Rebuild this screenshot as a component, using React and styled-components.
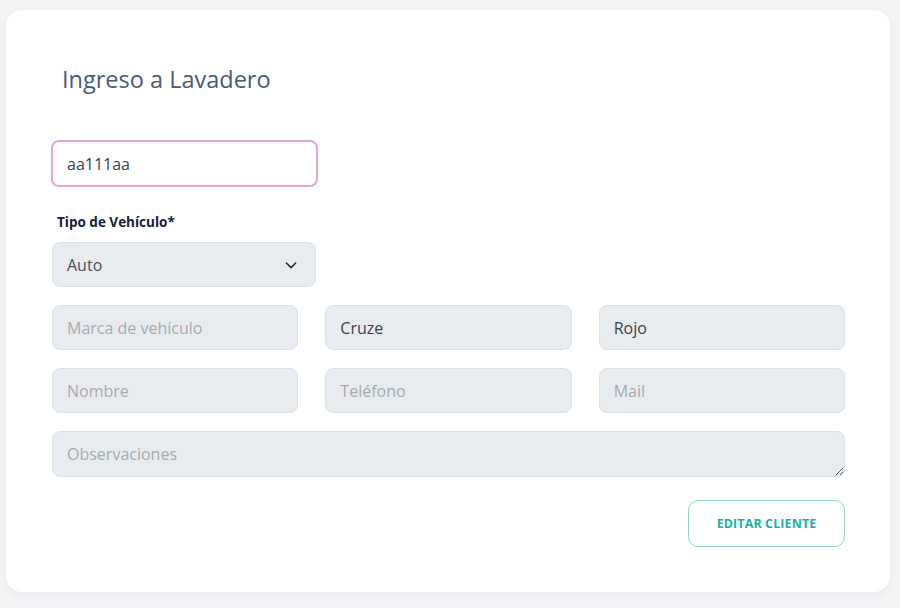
import styled, { createGlobalStyle } from "styled-components";

const GlobalStyle = createGlobalStyle`
  html, body {
    margin: 0;
    padding: 0;
    background: #f3f4f6;
    font-family: "Open Sans", "Noto Sans", sans-serif;
  }
  * { box-sizing: border-box; }
`;

const Page = styled.div`
  width: 900px;
  height: 608px;
  padding: 10px 10px 16px 6px;
`;

const Card = styled.div`
  background: #ffffff;
  border-radius: 16px;
  box-shadow: 0 2px 10px rgba(20, 30, 60, 0.05);
  height: 582px;
  padding: 54px 45px 0 46px;
`;

const Title = styled.h1`
  margin: 0 0 46px 10px;
  font-size: 23.5px;
  line-height: 30px;
  font-weight: 400;
  color: #4a5b74;
`;

const Field = styled.input`
  display: block;
  width: 100%;
  height: 45px;
  padding: 0 14px;
  border-radius: 8px;
  border: 1px solid #dde1e5;
  background: #e9ecef;
  font-family: inherit;
  font-size: 16px;
  color: #3d4249;
  outline: none;
  &::placeholder {
    color: #a5abb2;
  }
`;

const PlateInput = styled(Field)`
  width: 267px;
  height: 47px;
  margin-left: -1px;
  background: #ffffff;
  border: 2px solid #e6a6d6;
`;

const Label = styled.label`
  display: block;
  margin: 26px 0 11px 5px;
  font-size: 13.5px;
  line-height: 18px;
  font-weight: 700;
  color: #14213d;
`;

const SelectBox = styled.div`
  width: 264px;
  height: 45px;
  padding: 0 16px 0 14px;
  display: flex;
  align-items: center;
  justify-content: space-between;
  border-radius: 8px;
  border: 1px solid #dde1e5;
  background: #e9ecef;
  font-size: 16px;
  color: #4b5158;
`;

const Grid = styled.div`
  display: grid;
  grid-template-columns: repeat(3, 1fr);
  column-gap: 27px;
  row-gap: 18px;
  margin-top: 18px;
`;

const TextArea = styled.textarea`
  display: block;
  width: 100%;
  height: 46px;
  margin-top: 18px;
  padding: 10px 14px;
  border-radius: 8px;
  border: 1px solid #dde1e5;
  background: #e9ecef;
  font-family: inherit;
  font-size: 16px;
  line-height: 24px;
  color: #3d4249;
  resize: vertical;
  outline: none;
  &::placeholder {
    color: #a5abb2;
  }
`;

const Actions = styled.div`
  display: flex;
  justify-content: flex-end;
  margin-top: 23px;
`;

const OutlineButton = styled.button`
  width: 157px;
  height: 47px;
  border-radius: 10px;
  border: 1px solid #8fd6cc;
  background: #ffffff;
  color: #1cb0a4;
  font-family: inherit;
  font-size: 12.5px;
  font-weight: 700;
  letter-spacing: 0.1px;
  cursor: pointer;
`;

function Chevron() {
  return (
    <svg width="16" height="16" viewBox="0 0 24 24" fill="none" stroke="#2b2f35" strokeWidth="2.4" strokeLinecap="round" strokeLinejoin="round">
      <path d="M5 9l7 7 7-7" />
    </svg>
  );
}

export default function App() {
  return (
    <>
      <GlobalStyle />
      <Page>
        <Card>
          <Title>Ingreso a Lavadero</Title>
          <PlateInput defaultValue="aa111aa" />
          <Label>Tipo de Vehículo*</Label>
          <SelectBox>
            <span>Auto</span>
            <Chevron />
          </SelectBox>
          <Grid>
            <Field placeholder="Marca de vehículo" />
            <Field defaultValue="Cruze" />
            <Field defaultValue="Rojo" />
            <Field placeholder="Nombre" />
            <Field placeholder="Teléfono" />
            <Field placeholder="Mail" />
          </Grid>
          <TextArea placeholder="Observaciones" />
          <Actions>
            <OutlineButton>EDITAR CLIENTE</OutlineButton>
          </Actions>
        </Card>
      </Page>
    </>
  );
}
